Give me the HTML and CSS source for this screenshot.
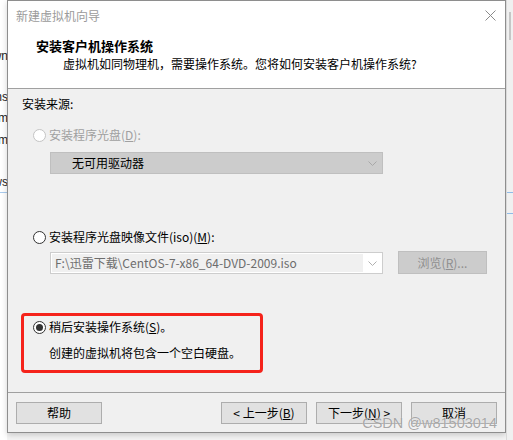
FILE: index.html
```html
<!DOCTYPE html>
<html lang="zh-CN">
<head>
<meta charset="utf-8">
<title>新建虚拟机向导</title>
<link rel="stylesheet" href="styles.css">
</head>
<body>
<div class="desk">
  <div class="behind-left">
    <span class="frag f1">own</span>
    <span class="frag f2">ms</span>
    <span class="frag f3">om</span>
    <span class="frag f4">om</span>
    <span class="frag f5">ows</span>
    <span class="bl-line"></span>
  </div>

  <div class="wizard">
    <div class="titlebar">
      <span class="title">新建虚拟机向导</span>
      <svg class="close" width="11" height="11" viewBox="0 0 11 11"><path d="M0.5 0.5 L10.5 10.5 M10.5 0.5 L0.5 10.5" stroke="#8a8a8a" stroke-width="1" fill="none"/></svg>
    </div>
    <div class="header">
      <div class="heading">安装客户机操作系统</div>
      <div class="subheading">虚拟机如同物理机，需要操作系统。您将如何安装客户机操作系统?</div>
    </div>

    <div class="content">
      <div class="label">安装来源:</div>

      <div class="radio-row disabled r1">
        <span class="radio"></span>
        <span>安装程序光盘(<u>D</u>):</span>
      </div>
      <div class="combo combo-disabled">
        <span class="combo-text">无可用驱动器</span>
        <svg class="chev" width="9" height="5" viewBox="0 0 9 5"><path d="M0.5 0.5 L4.5 4.5 L8.5 0.5" stroke="#a8a8a8" fill="none"/></svg>
      </div>

      <div class="radio-row r2">
        <span class="radio"></span>
        <span>安装程序光盘映像文件(iso)(<u>M</u>):</span>
      </div>
      <div class="iso-row">
        <div class="combo combo-iso">
          <span class="field">F:\迅雷下载\CentOS-7-x86_64-DVD-2009.iso</span>
          <svg class="chev" width="9" height="5" viewBox="0 0 9 5"><path d="M0.5 0.5 L4.5 4.5 L8.5 0.5" stroke="#b0b0b0" fill="none"/></svg>
        </div>
        <button class="btn browse" disabled>浏览(<u>R</u>)...</button>
      </div>

      <div class="radio-row r3">
        <span class="radio checked"></span>
        <span>稍后安装操作系统(<u>S</u>)。</span>
      </div>
      <div class="desc">创建的虚拟机将包含一个空白硬盘。</div>
    </div>

    <div class="footer">
      <button class="btn">帮助</button>
      <span class="spacer"></span>
      <button class="btn">&lt; 上一步(<u>B</u>)</button>
      <button class="btn">下一步(<u>N</u>) &gt;</button>
      <button class="btn">取消</button>
    </div>

    <div class="annotation"></div>
  </div>

  <div class="behind-right">
    <span class="thumb"></span>
    <span class="br-line b1"></span>
    <span class="br-line b2"></span>
  </div>
</div>
<div class="watermark">CSDN @w81503014</div>
</body>
</html>
```

FILE: styles.css
```css
* { box-sizing: border-box; }

html, body {
  margin: 0;
  padding: 0;
  width: 513px;
  height: 440px;
  overflow: hidden;
  background: #f4f4f4;
  font-family: "Noto Sans CJK SC", "Microsoft YaHei", sans-serif;
  font-size: 12px;
  color: #000;
}

body { position: relative; }

.desk {
  display: flex;
  align-items: flex-start;
  height: 440px;
}

/* window behind, left */
.behind-left {
  position: relative;
  width: 7px;
  height: 440px;
  background: #fff;
  overflow: hidden;
  flex: none;
}
.frag {
  position: absolute;
  right: -1px;
  font-family: "Liberation Sans", sans-serif;
  font-size: 12px;
  line-height: 14px;
  color: #222;
}
.f1 { top: 49px; }
.f2 { top: 90px; }
.f3 { top: 111px; }
.f4 { top: 133px; }
.f5 { top: 175px; }
.bl-line {
  position: absolute;
  left: 0;
  top: 192px;
  width: 7px;
  height: 1px;
  background: #a9cbee;
}

/* main wizard window */
.wizard {
  position: relative;
  width: 499px;
  height: 433px;
  flex: none;
  border: 1px solid #8e8e8e;
  background: #f0f0f0;
  display: flex;
  flex-direction: column;
  box-shadow: 0 2px 6px rgba(0, 0, 0, 0.18);
}

.titlebar {
  height: 29px;
  background: #fff;
  display: flex;
  align-items: center;
  justify-content: space-between;
  padding: 0 9px 0 8px;
}
.title {
  color: #9b9b9b;
  line-height: 16px;
  padding-top: 0;
}
.close { display: block; margin-top: -1px; }

.header {
  background: #fff;
  padding: 7px 0 15px 28px;
  border-bottom: 1px solid #a0a0a0;
}
.heading {
  font-size: 13px;
  font-weight: bold;
  line-height: 18px;
}
.subheading {
  line-height: 18px;
  padding-left: 27px;
}

.content {
  height: 303px;
  display: flex;
  flex-direction: column;
  align-items: flex-start;
}
.label {
  margin: 6px 0 0 14px;
  line-height: 18px;
}

.radio-row {
  display: flex;
  align-items: center;
  height: 18px;
  line-height: 18px;
  margin-left: 25px;
}
.r1 { margin-top: 13px; }
.r2 { margin-top: 54px; }
.r3 { margin-top: 44px; }

.radio {
  position: relative;
  width: 13px;
  height: 13px;
  border-radius: 50%;
  border: 1px solid #333;
  background: #fff;
  margin-right: 3px;
  flex: none;
}
.disabled { color: #a0a0a0; }
.disabled .radio { border-color: #c4c4c4; }
.radio.checked::after {
  content: "";
  position: absolute;
  left: 2px;
  top: 2px;
  width: 7px;
  height: 7px;
  border-radius: 50%;
  background: #333;
}

u { text-underline-offset: 1px; }

.combo {
  display: flex;
  align-items: center;
  justify-content: space-between;
  width: 333px;
  height: 22px;
  border: 1px solid #bfbfbf;
  flex: none;
}
.combo-disabled {
  margin: 8px 0 0 42px;
  background: #cccccc;
  padding: 0 5px 0 21px;
}
.combo-text { line-height: 18px; }
.chev { display: block; }

.iso-row {
  display: flex;
  align-items: flex-start;
  margin: 5px 0 0 42px;
  height: 23px;
}
.combo-iso {
  margin-top: 1px;
  background: #fff;
  border-color: #cdcdcd;
  padding: 1px 5px 1px 1px;
  align-items: stretch;
}
.combo-iso .chev { align-self: center; }
.field {
  width: 311px;
  background: #f0f0f0;
  color: #6d6d6d;
  padding-left: 3px;
  line-height: 18px;
  white-space: nowrap;
}

.btn {
  font-family: "Noto Sans CJK SC", "Microsoft YaHei", sans-serif;
  font-size: 12px;
  line-height: 16px;
  color: #000;
  width: 86px;
  height: 22px;
  padding: 0;
  margin: 0;
  border: 1px solid #adadad;
  background: #e1e1e1;
  border-radius: 0;
  text-align: center;
}
.browse {
  width: 89px;
  height: 23px;
  margin-left: 15px;
  background: #cccccc;
  border-color: #bfbfbf;
  color: #8f8f8f;
}

.desc {
  margin: 8px 0 0 41px;
  line-height: 18px;
}

.footer {
  border-top: 1px solid #a0a0a0;
  padding: 9px 8px 8px 8px;
  display: flex;
  gap: 9px;
  height: 40px;
}
.spacer { flex: 1; margin-right: 101px; }

/* red annotation frame drawn over the dialog */
.annotation {
  position: absolute;
  left: 13px;
  top: 312px;
  width: 242px;
  height: 60px;
  border: 3px solid #f5231b;
  border-radius: 4px;
  pointer-events: none;
}

/* window behind, right */
.behind-right {
  position: relative;
  flex: 1;
  height: 440px;
  background: #f0f0f0;
  border-left: 1px solid #dadada;
}
.thumb {
  position: absolute;
  left: 2px;
  top: 12px;
  width: 2px;
  height: 28px;
  background: #c6c6c6;
}
.br-line {
  position: absolute;
  left: 0;
  right: 0;
  height: 1px;
  background: #8fbbe8;
}
.b1 { top: 192px; }
.b2 { top: 213px; }

/* CSDN watermark */
.watermark {
  position: absolute;
  right: 16px;
  top: 415px;
  font-family: "Liberation Sans", Arial, sans-serif;
  font-size: 14.5px;
  line-height: 17px;
  color: rgba(140, 140, 140, 0.75);
  text-shadow: 0 0 1px rgba(255, 255, 255, 0.8);
  white-space: nowrap;
}
```
